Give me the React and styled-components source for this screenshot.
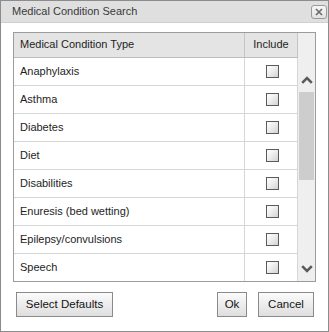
import React from "react";
import styled, { createGlobalStyle } from "styled-components";

const Global = createGlobalStyle`
  html, body { margin: 0; padding: 0; background: #ffffff; }
  body { font-family: "Liberation Sans", Arial, sans-serif; }
  * { box-sizing: border-box; }
`;

const Dialog = styled.div`
  width: 329px;
  height: 332px;
  border: 1px solid #8c8c8c;
  background: #ffffff;
  display: flex;
  flex-direction: column;
`;

const TitleBar = styled.div`
  height: 22px;
  flex: none;
  background: #dfdfdf;
  border-bottom: 1px solid #cfcfcf;
  display: flex;
  align-items: center;
  justify-content: space-between;
  padding: 0 1px 0 11px;
`;

const Title = styled.span`
  font-size: 11px;
  color: #3a3a3a;
  margin-bottom: 2px;
`;

const CloseButton = styled.button`
  width: 16px;
  height: 14px;
  margin-top: 1px;
  padding: 0;
  border: 1px solid #9a9a9a;
  border-radius: 3px;
  background: linear-gradient(#f6f6f6, #e2e2e2);
  display: flex;
  align-items: center;
  justify-content: center;
`;

const Body = styled.div`
  flex: 1;
  display: flex;
  flex-direction: column;
  padding: 9px 12px 15px 12px;
`;

const TableBox = styled.div`
  height: 250px;
  border: 1px solid #9c9c9c;
  display: flex;
`;

const Grid = styled.div`
  flex: 1;
  display: flex;
  flex-direction: column;
`;

const Row = styled.div`
  display: grid;
  grid-template-columns: 231px 53px;
  height: ${(p) => (p.$header ? 25 : p.$last ? 27 : 28)}px;
  border-bottom: ${(p) => (p.$last ? "none" : p.$header ? "1px solid #bdbdbd" : "1px solid #d6d6d6")};
  background: ${(p) => (p.$header ? "#e4e4e4" : "#ffffff")};
`;

const NameCell = styled.div`
  border-right: 1px solid ${(p) => (p.$header ? "#c4c4c4" : "#d6d6d6")};
  display: flex;
  align-items: center;
  padding: 0 0 2px 6px;
  font-size: 11px;
  color: #1e1e1e;
`;

const IncludeCell = styled.div`
  border-right: 1px solid ${(p) => (p.$header ? "#c4c4c4" : "#d6d6d6")};
  display: flex;
  align-items: center;
  justify-content: center;
  padding: 0 0 ${(p) => (p.$header ? 2 : 1)}px ${(p) => (p.$header ? 0 : 3)}px;
  font-size: 11px;
  color: #1e1e1e;
`;

const Check = styled.span`
  width: 13px;
  height: 13px;
  border: 1px solid #5a5a5a;
  background: linear-gradient(135deg, #ffffff 0%, #eeeeee 45%, #d2d2d2 100%);
`;

const Scrollbar = styled.div`
  width: 17px;
  flex: none;
  background: #efefef;
  display: flex;
  flex-direction: column;
  align-items: center;
  padding: 43px 0 8px 0;
`;

const Thumb = styled.div`
  width: 15px;
  height: 88px;
  margin-top: 8px;
  background: #cdcdcd;
`;

const Spacer = styled.div`
  flex: 1;
`;

const Footer = styled.div`
  display: flex;
  align-items: center;
  margin-top: 10px;
  padding: 0 2px 0 3px;
`;

const Button = styled.button`
  height: 25px;
  width: ${(p) => p.$w}px;
  margin-left: ${(p) => p.$ml || 0}px;
  padding: 0 0 1px 0;
  border: 1px solid #8a8a8a;
  background: linear-gradient(#fbfbfb, #dedede);
  font-family: "Liberation Sans", Arial, sans-serif;
  font-size: 11.5px;
  color: #141414;
`;

const Chevron = ({ up }) => (
  <svg width="12" height="8" viewBox="0 0 12 8">
    <polyline
      points={up ? "1.2,6.8 6,2 10.8,6.8" : "1.2,1.2 6,6 10.8,1.2"}
      fill="none"
      stroke="#5a5a5a"
      strokeWidth="2.6"
    />
  </svg>
);

const conditions = [
  "Anaphylaxis",
  "Asthma",
  "Diabetes",
  "Diet",
  "Disabilities",
  "Enuresis (bed wetting)",
  "Epilepsy/convulsions",
  "Speech",
];

export default function App() {
  return (
    <>
      <Global />
      <Dialog>
        <TitleBar>
          <Title>Medical Condition Search</Title>
          <CloseButton aria-label="Close">
            <svg width="8" height="8" viewBox="0 0 8 8">
              <path d="M1 1 L7 7 M7 1 L1 7" stroke="#6a6a6a" strokeWidth="1.6" />
            </svg>
          </CloseButton>
        </TitleBar>
        <Body>
          <TableBox>
            <Grid>
              <Row $header>
                <NameCell $header>Medical Condition Type</NameCell>
                <IncludeCell $header>Include</IncludeCell>
              </Row>
              {conditions.map((c, i) => (
                <Row key={c} $last={i === conditions.length - 1}>
                  <NameCell>{c}</NameCell>
                  <IncludeCell>
                    <Check />
                  </IncludeCell>
                </Row>
              ))}
            </Grid>
            <Scrollbar>
              <Chevron up />
              <Thumb />
              <Spacer />
              <Chevron />
            </Scrollbar>
          </TableBox>
          <Footer>
            <Button $w={97}>Select Defaults</Button>
            <Spacer />
            <Button $w={30}>Ok</Button>
            <Button $w={56} $ml={11}>Cancel</Button>
          </Footer>
        </Body>
      </Dialog>
    </>
  );
}
